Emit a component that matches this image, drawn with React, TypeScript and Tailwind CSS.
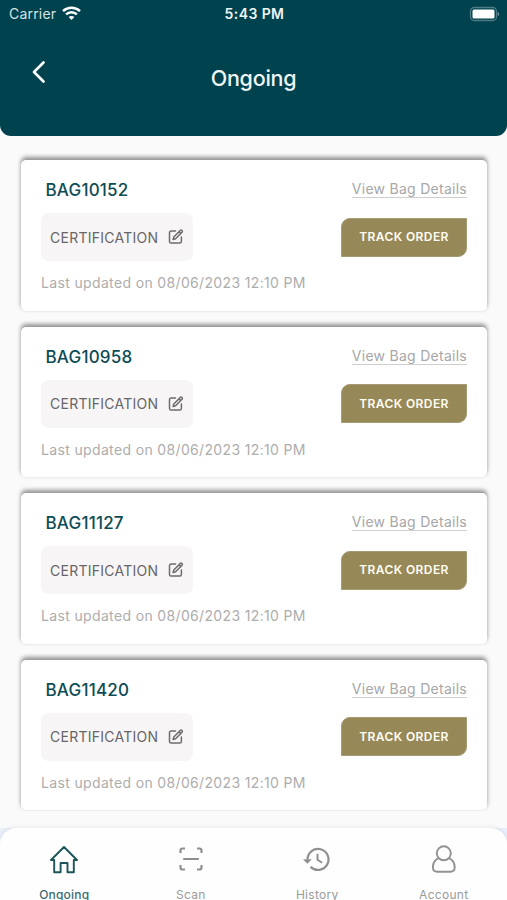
import React from "react";

const bags = ["BAG10152", "BAG10958", "BAG11127", "BAG11420"];

function StatusBar() {
  return (
    <div className="flex h-7 items-center justify-between pl-[9px] pr-[7px] text-white">
      <div className="flex w-[100px] items-center gap-[6px]">
        <span className="text-[14px] leading-7 tracking-[0.2px] text-[#d5e3e5]">Carrier</span>
        <svg width="19" height="14" viewBox="0 0 19 14" fill="none" stroke="white" strokeWidth="2.5" className="mt-[-3px]">
          <path d="M1 5.1C5.8.6 13.2.6 18 5.1" />
          <path d="M4.1 8.4c3-2.9 7.8-2.9 10.8 0" />
          <path d="M9.5 14l-2.9-3c1.6-1.5 4.2-1.5 5.8 0z" fill="white" stroke="none" />
        </svg>
      </div>
      <span className="text-[14px] font-semibold leading-7 tracking-[0.42px] text-[#edf4f5]">5:43 PM</span>
      <div className="flex w-[100px] justify-end">
        <svg width="31" height="16" viewBox="0 0 31 16" className="mt-[-1px]">
          <rect x="1.5" y="1.5" width="26" height="13" rx="3.8" fill="none" stroke="#4d7c86" strokeWidth="1.3" />
          <rect x="3.5" y="3.5" width="22" height="9" rx="1.5" fill="white" />
          <path d="M28.7 5.8c1.8.7 1.8 3.7 0 4.4z" fill="#7fa0a6" />
        </svg>
      </div>
    </div>
  );
}

function EditIcon() {
  return (
    <svg width="16" height="16" viewBox="0 0 16 16" fill="none" stroke="#6d6b6c" strokeWidth="1.5" strokeLinejoin="round" strokeLinecap="round">
      <path d="M7.5 2.1H3.1c-.9 0-1.6.7-1.6 1.6v8.7c0 .9.7 1.6 1.6 1.6h8.7c.9 0 1.6-.7 1.6-1.6V8" />
      <path d="M12.2 1.5c.5-.5 1.3-.5 1.8 0s.5 1.3 0 1.8L7.6 9.8l-2.5.7.7-2.5z M11 2.8l1.8 1.8" />
    </svg>
  );
}

function BagCard({ id }: { id: string }) {
  return (
    <article className="flex h-[150.5px] shrink-0 flex-col rounded-[5px] bg-white pl-5 pr-5 shadow-[0_-2.5px_4px_rgba(0,0,0,0.42)]">
      <div className="flex h-[53px] shrink-0 items-start justify-between pl-[4.5px] pt-[20px]">
        <h2 className="text-[17px] font-medium leading-5 tracking-[0.2px] text-[#0d4c56]">{id}</h2>
        <a className="border-b border-[#cfcfcf] text-[14px] leading-[17px] tracking-[0.27px] text-[#a7a7a7]">View Bag Details</a>
      </div>
      <div className="flex h-12 shrink-0 items-center justify-between">
        <div className="flex h-12 w-[151.5px] items-center justify-between rounded-[8px] bg-[#f7f5f6] pl-[9px] pr-[9px]">
          <span className="text-[14px] tracking-[0.25px] text-[#686667]">CERTIFICATION</span>
          <EditIcon />
        </div>
        <button className="h-[39px] w-[126px] rounded-tl-[9px] rounded-br-[9px] border border-[#a49a73] bg-[#978858] text-[12px] font-semibold tracking-[0.42px] text-[#fffdf2]">
          TRACK ORDER
        </button>
      </div>
      <p className="mt-[13px] text-[14px] leading-[18px] tracking-[0.35px] text-[#adadad]">Last updated on 08/06/2023 12:10 PM</p>
    </article>
  );
}

function HomeIcon() {
  return (
    <svg width="30" height="30" viewBox="0 0 30 30" fill="none" stroke="#1b5459" strokeWidth="1.9" strokeLinejoin="round" strokeLinecap="round" className="shrink-0">
      <path d="M2 16L15 3l13 13h-3.200V28.200h-6.300v-9.200h-6.900v9.200H5.200V16z" />
    </svg>
  );
}

function ScanIcon() {
  return (
    <svg width="30" height="30" viewBox="0 0 30 30" fill="none" stroke="#8f8f8f" strokeWidth="2.2" className="shrink-0">
      <path d="M4.500 9V6.500c0-1.100.9-2 2-2H9M21 4.500h2.500c1.100 0 2 .9 2 2V9M25.500 21v2.500c0 1.100-.9 2-2 2H21M9 25.500H6.500c-1.100 0-2-.9-2-2V21" />
      <path d="M8 15h14" strokeLinecap="round" />
    </svg>
  );
}

function HistoryIcon() {
  return (
    <svg width="30" height="30" viewBox="0 0 30 30" fill="none" stroke="#8f8f8f" strokeWidth="2.2" className="shrink-0">
      <path d="M5.500 15.500A10.500 10.500 0 1 1 8.600 22.900" />
      <path d="M1 15.200h8.800l-4.400 4.500z" fill="#8f8f8f" stroke="none" />
      <path d="M15.500 9.800v5.900l4.700 3" strokeWidth="1.9" />
    </svg>
  );
}

function AccountIcon() {
  return (
    <svg width="30" height="30" viewBox="0 0 30 30" fill="none" stroke="#929292" strokeWidth="1.9" strokeLinejoin="round" className="shrink-0">
      <circle cx="14.800" cy="9.300" r="7" />
      <path d="M9.600 14.200C6 15.800 3.900 19.300 3.900 23.300c0 2.900 1.500 4.500 4.400 4.500h13c2.900 0 4.400-1.600 4.400-4.500 0-4-2.100-7.500-5.700-9.100" />
    </svg>
  );
}

const tabs = [
  { label: "Ongoing", icon: <HomeIcon />, active: true },
  { label: "Scan", icon: <ScanIcon />, active: false },
  { label: "History", icon: <HistoryIcon />, active: false },
  { label: "Account", icon: <AccountIcon />, active: false },
];

export default function App() {
  return (
    <div className="flex h-[900px] w-[507px] flex-col overflow-hidden bg-[#fafafa] font-[Inter,sans-serif]">
      <header className="h-[135.5px] shrink-0 rounded-b-[11px] bg-[#00424d]">
        <StatusBar />
        <div className="flex h-[98px] items-center justify-between pl-[30px] pr-[30px]">
          <svg width="20" height="26" viewBox="0 0 20 26" fill="none" stroke="white" strokeWidth="2.7" strokeLinecap="round" strokeLinejoin="round" className="mt-[-10px]">
            <path d="M13.500 3.500L4 13l9.500 9.500" />
          </svg>
          <h1 className="mt-[2px] text-[21.5px] font-medium tracking-[-0.25px] text-[#eef6f7]">Ongoing</h1>
          <span className="w-5" />
        </div>
      </header>
      <main className="h-[675px] shrink-0 overflow-hidden pl-[21px] pr-5 pt-[24.5px]">
        <div className="flex flex-col gap-[16.1px]">
          {bags.map((id) => (
            <BagCard key={id} id={id} />
          ))}
        </div>
      </main>
      <div className="h-[17.5px] shrink-0" />
      <div className="h-[72px] shrink-0 overflow-visible bg-[#e8effa]">
        <nav className="flex h-[72px] rounded-t-[16px] bg-[#fefefe] pl-px shadow-[0_-1px_4px_rgba(0,0,0,0.07)]">
          {tabs.map((tab) => (
            <div key={tab.label} className="flex flex-1 flex-col items-center pt-[16px]">
              {tab.icon}
              <span className={tab.active ? "mt-[13px] text-[12px] font-medium leading-4 tracking-[0.2px] text-[#3c6c73]" : "mt-[13px] text-[12px] leading-4 tracking-[0.3px] text-[#9b9b9b]"}>
                {tab.label}
              </span>
            </div>
          ))}
        </nav>
      </div>
    </div>
  );
}
